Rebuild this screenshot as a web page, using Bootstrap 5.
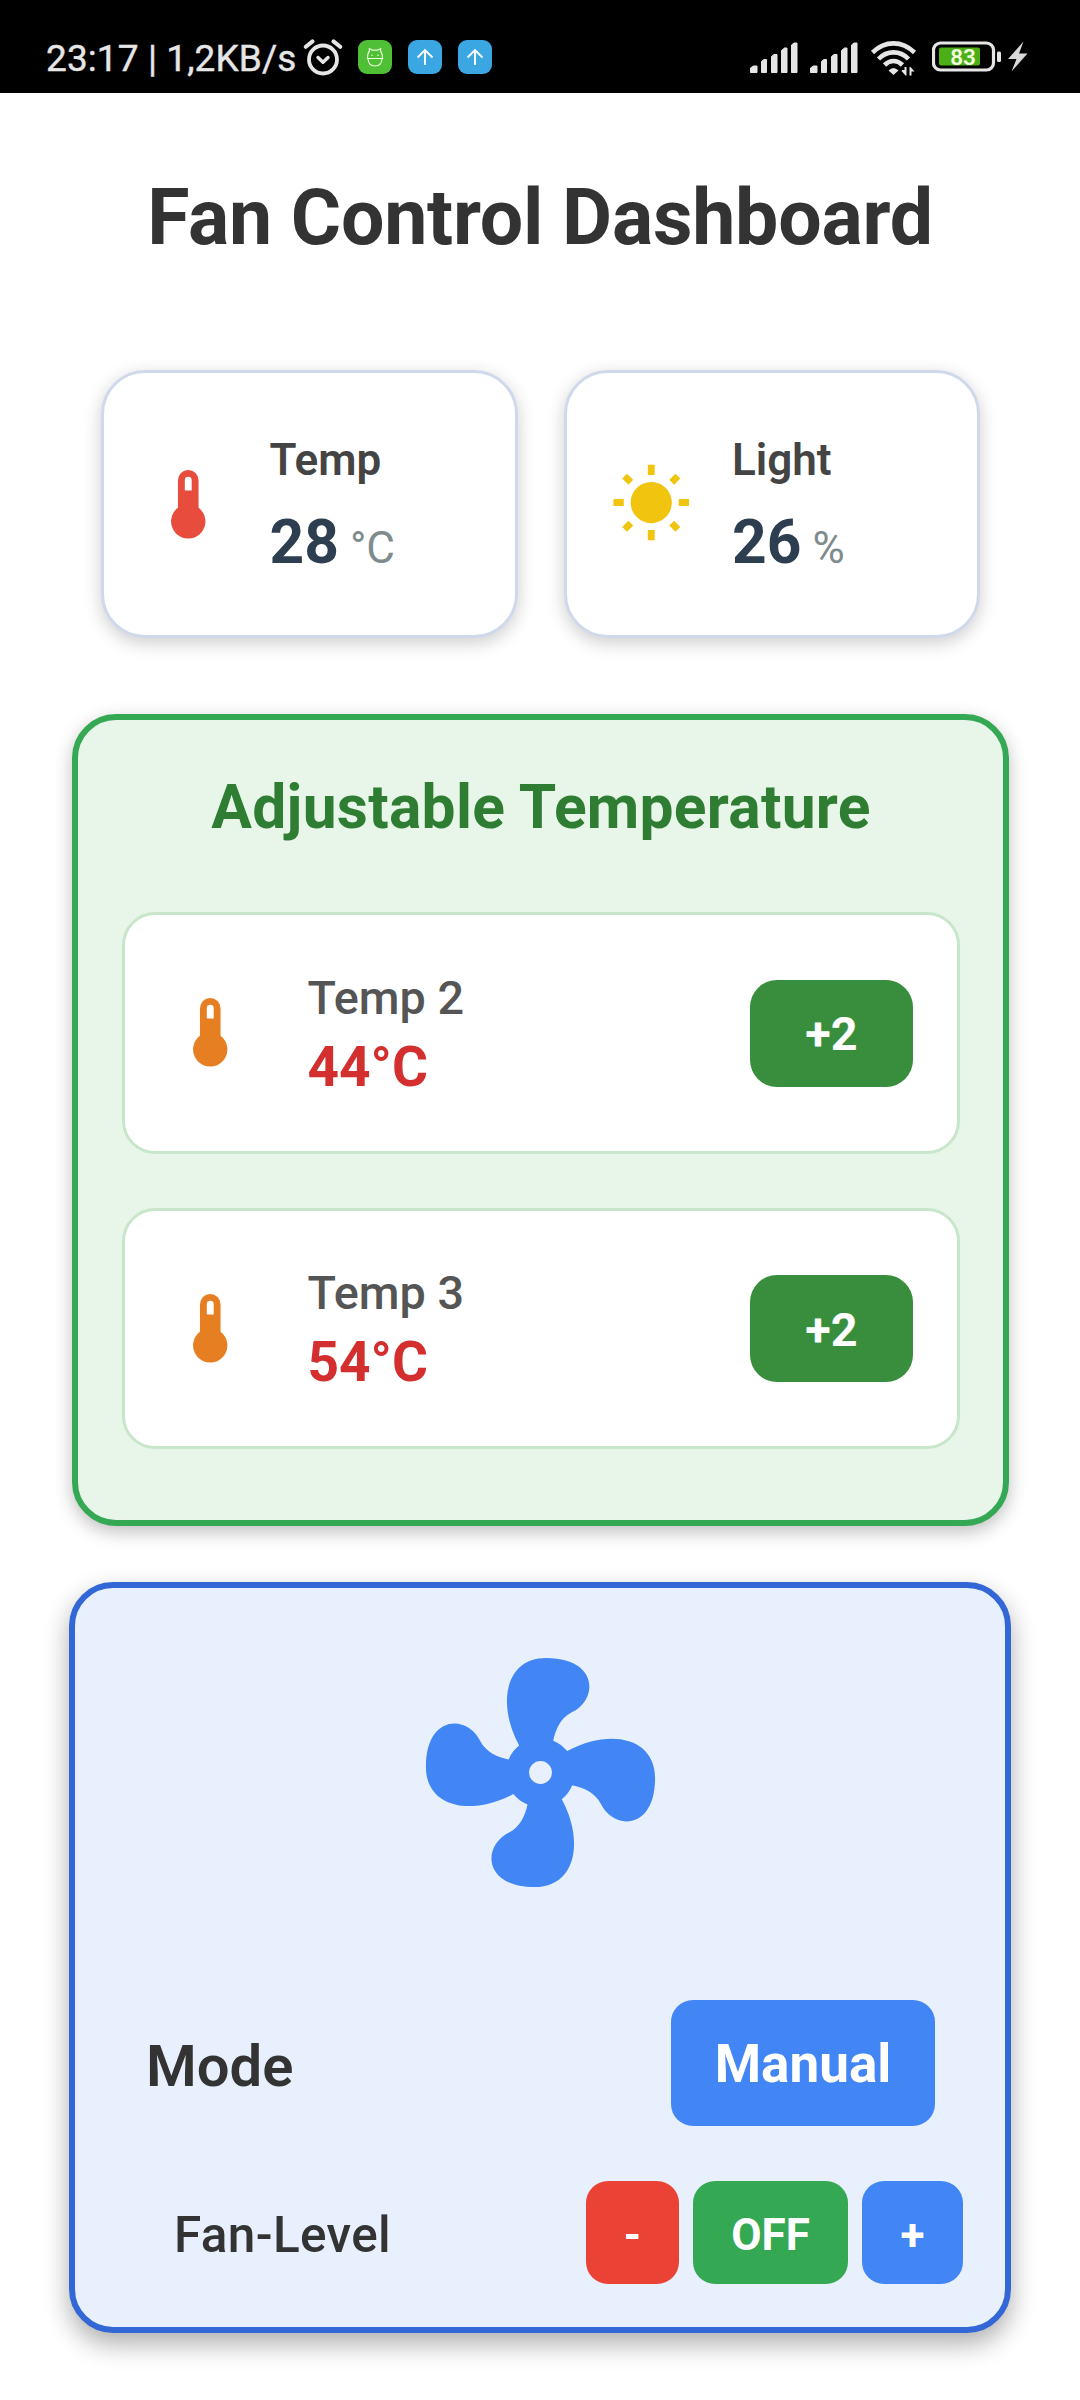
<!DOCTYPE html>
<html lang="en">
<head>
<meta charset="utf-8">
<meta name="viewport" content="width=device-width, initial-scale=1">
<title>Fan Control Dashboard</title>
<link href="https://cdn.jsdelivr.net/npm/bootstrap@5.3.0/dist/css/bootstrap.min.css" rel="stylesheet">
<style>
  body { font-family: Roboto, "Liberation Sans", sans-serif; background: #fff; color: #333; height: 2400px; overflow: hidden; }
  svg { display: block; flex: none; }
  .statusbar { height: 93px; background: #000; color: #e6e6e6; padding: 19px 52px 0 46px; }
  .clock { font-size: 37px; line-height: 40px; white-space: pre; width: 258px; margin-top: 20px; letter-spacing: .1px; -webkit-text-stroke: .4px #e6e6e6; }
  .alarm { margin: 20px 14px 0 -1px; }
  .app-icon { width: 34px; height: 34px; border-radius: 9px; margin: 21px 16px 0 0; }
  .app-green { background: #4fbf35; margin-left: 1px; }
  .app-blue { background: #3ba7e2; }
  .status-right { margin-top: 22px; }
  .signal { margin: 1px 12px 0 0; }
  .wifi { margin-right: 14px; }
  .battery { margin-right: 6px; }
  .page-title { font-size: 77px; line-height: 90px; font-weight: 700; letter-spacing: -.22px; margin: 80px 0 107px; }
  .sensor-row { margin: 0 100px 0 101px; gap: 46px; }
  .sensor { height: 268px; border: 3px solid #d0d9ec; border-radius: 44px; padding: 4px 20px 0 43px; gap: 40px; box-shadow: 0 5px 18px rgba(0,0,0,.2); background: #fff; }
  .sensor svg { margin-top: -4px; }
  .sensor-label { font-size: 44px; line-height: 52px; font-weight: 600; color: #444; margin-bottom: 22px; }
  .sensor-value { font-size: 60.5px; line-height: 70px; font-weight: 700; color: #2c3e50; }
  .sensor-unit { font-size: 44px; line-height: 1; font-weight: 400; color: #7f8c8d; margin-left: 11px; }
  .tone-red { color: #e74c3c; }
  .tone-orange { color: #e67e22; }
  .panel-green { height: 812px; margin: 76px 71px 0 72px; border: 6px solid #34a853; border-radius: 44px; background: #e7f6e9; padding: 52px 43px 0 44px; box-shadow: 0 6px 18px rgba(0,0,0,.25); }
  .panel-title { font-size: 60.5px; line-height: 72px; font-weight: 700; letter-spacing: .28px; color: #2e7d32; margin: 0 0 68px; }
  .zone { height: 242px; border: 3px solid #c8e6c9; border-radius: 33px; background: #fff; padding: 0 44px; }
  .zone + .zone { height: 241px; margin-top: 54px; }
  .zone svg { margin-top: -1px; }
  .zone-text { margin-left: 56px; }
  .zone-name { font-size: 46.75px; line-height: 62px; font-weight: 500; color: #555; }
  .zone-temp { font-size: 55px; line-height: 66px; font-weight: 700; color: #d32f2f; margin-top: 5px; }
  .btn { --bs-btn-padding-x: 0; --bs-btn-padding-y: 0; --bs-btn-border-width: 0; font-weight: 700; color: #fff; }
  .btn-step { width: 163px; height: 107px; border-radius: 27px; background: #388e3c; font-size: 46.75px; padding-top: 3px; }
  .panel-blue { height: 751px; margin: 56px 69px 0; border: 6px solid #3367d6; border-radius: 44px; background: #e7f0fc; padding-top: 47px; box-shadow: 0 11px 26px rgba(0,0,0,.32); }
  .mode-row { margin-top: 90px; height: 126px; padding: 0 70px 0 71px; }
  .mode-label { font-size: 58px; font-weight: 600; padding-top: 7px; }
  .btn-mode { width: 264px; height: 126px; border-radius: 22px; background: #4285f4; font-size: 53px; padding-top: 4px; }
  .level-row { margin-top: 55px; height: 103px; padding: 0 42px 0 99px; }
  .level-label { font-size: 49.5px; font-weight: 500; letter-spacing: .35px; padding-top: 5px; }
  .level-btns { gap: 14px; }
  .btn-level { height: 103px; border-radius: 22px; font-size: 44px; padding-top: 4px; }
  .lv-minus { width: 93px; background: #ea4335; }
  .lv-state { width: 155px; background: #34a853; }
  .lv-plus { width: 101px; background: #4285f4; }
</style>
<script src="https://cdn.jsdelivr.net/npm/bootstrap@5.3.0/dist/js/bootstrap.bundle.min.js"></script>
</head>
<body>
<svg width="0" height="0" class="position-absolute" aria-hidden="true">
  <symbol id="thermo" viewBox="0 0 24 24"><path fill="currentColor" fill-rule="evenodd" d="M15 13V5a3 3 0 0 0-6 0v8a5 5 0 1 0 6 0m-3-9a1 1 0 0 1 1 1v3h-2V5a1 1 0 0 1 1-1z"/></symbol>
  <symbol id="bars" viewBox="0 0 48 31"><path fill="#e6e6e6" stroke="#e6e6e6" stroke-linejoin="round" d="M.5 30.500v-4.500l3-2h3.500v6.500zM11.500 30.500v-11l2.500-2h2.500v13zM21.500 30.500v-16l2.500-2h3v18zM31.500 30.500v-22l3-2.500h2.500v24.500zM41.500 30.500v-27.500l2.500-2h3v29.500z"/></symbol>
  <symbol id="up" viewBox="0 0 34 34"><path fill="none" stroke="#fff" stroke-width="1.900" d="M17 25V10M9.500 17.500 17 10l7.500 7.500"/></symbol>
</svg>

<header class="statusbar d-flex justify-content-between">
  <div class="d-flex align-items-start">
    <div class="clock">23:17 | 1,2KB/s</div>
    <svg class="alarm" width="40" height="37" viewBox="0 0 40 37" fill="none" stroke="#e6e6e6" stroke-linecap="round">
      <circle cx="20" cy="20.500" r="14" stroke-width="3.800"/>
      <path stroke-width="4" d="M2.800 7.800 9.500 2.400M37.200 7.800 30.500 2.400"/>
      <path stroke-width="3.400" stroke-linejoin="round" d="m15 18.500 5 4.800 5-4.800"/>
    </svg>
    <svg class="app-icon app-green" viewBox="0 0 34 34" fill="none" stroke="#e9ffd9" stroke-width="1.200" stroke-linejoin="round">
      <path d="M9.500 18.500c0-3 .5-5.500 1.800-7V8.500l3 1.700h5.400l3-1.700v3c1.300 1.500 1.800 4 1.800 7zM8.800 18.500h16.400M10 18.500c.3 4.500 3 7.500 7 7.500s6.700-3 7-7.500"/>
      <path d="M14 14.500v1.500M20 14.500v1.500"/>
    </svg>
    <svg class="app-icon app-blue"><use href="#up"/></svg>
    <svg class="app-icon app-blue"><use href="#up"/></svg>
  </div>
  <div class="status-right d-flex align-items-start">
    <svg class="signal" width="48" height="31"><use href="#bars"/></svg>
    <svg class="signal" width="48" height="31"><use href="#bars"/></svg>
    <svg class="wifi" width="48" height="35" viewBox="0 0 48 35" fill="none" stroke="#e6e6e6" stroke-width="4.600">
      <path d="M2.500 11.500Q12 2.400 23.500 2.400T44.500 11.500M8.500 18Q15 11.400 23.500 11.400T38.500 18M14.500 24Q18.500 20 23.500 20T32.500 24"/>
      <path fill="#e6e6e6" stroke="none" d="M18.500 29.500q5-5 10 0l-5 4.500zM31.500 29h3v-3h2v8.500h-1zM36.500 26v8.500h-1l-4-4.500h3v-4zM39.500 26h1l4 4.500h-3v4h-2z"/>
    </svg>
    <svg class="battery" width="70" height="32" viewBox="0 0 70 32">
      <rect x="1.500" y="2" width="60" height="27" rx="7" fill="none" stroke="#e6e6e6" stroke-width="3.200"/>
      <rect x="65" y="10.500" width="4" height="10.500" rx="1.500" fill="#e6e6e6"/>
      <rect x="7" y="6.500" width="41" height="18" rx="2" fill="#4caf16"/>
      <text x="31" y="24" text-anchor="middle" font-size="22.500" font-weight="600" fill="#f4ffe0" font-family="Roboto">83</text>
    </svg>
    <svg width="20" height="31" viewBox="0 0 20 31"><path fill="#d9d9d9" d="M15.500.5 0 18h8.500L3.500 30.500 19.500 12.500H11z"/></svg>
  </div>
</header>

<main>
  <h1 class="page-title text-center">Fan Control Dashboard</h1>

  <section class="sensor-row d-flex">
    <div class="sensor d-flex align-items-center flex-fill w-50">
      <svg class="tone-red" width="82.500" height="82.500"><use href="#thermo"/></svg>
      <div>
        <div class="sensor-label">Temp</div>
        <div class="sensor-value">28<span class="sensor-unit">°C</span></div>
      </div>
    </div>
    <div class="sensor d-flex align-items-center flex-fill w-50">
      <svg width="82.500" height="82.500" viewBox="0 .5 24 24"><path fill="#f1c40f" d="m3.550 19.090 1.410 1.410 1.800-1.790-1.420-1.420M12 6a6 6 0 0 0-6 6 6 6 0 0 0 6 6 6 6 0 0 0 6-6c0-3.320-2.690-6-6-6m8 7h3v-2h-3m-2.760 7.710 1.800 1.790 1.410-1.410-1.790-1.800M20.450 5 19.040 3.600l-1.800 1.790 1.420 1.420M13 1h-2v3h2M6.760 5.390 4.960 3.600 3.550 5l1.790 1.810M1 13h3v-2H1m12 9h-2v3h2"/></svg>
      <div>
        <div class="sensor-label">Light</div>
        <div class="sensor-value">26<span class="sensor-unit">%</span></div>
      </div>
    </div>
  </section>

  <section class="panel-green">
    <h2 class="panel-title text-center">Adjustable Temperature</h2>
    <div class="zone d-flex align-items-center">
      <svg class="tone-orange" width="82.500" height="82.500"><use href="#thermo"/></svg>
      <div class="zone-text">
        <div class="zone-name">Temp 2</div>
        <div class="zone-temp">44°C</div>
      </div>
      <button class="btn btn-step ms-auto" type="button">+2</button>
    </div>
    <div class="zone d-flex align-items-center">
      <svg class="tone-orange" width="82.500" height="82.500"><use href="#thermo"/></svg>
      <div class="zone-text">
        <div class="zone-name">Temp 3</div>
        <div class="zone-temp">54°C</div>
      </div>
      <button class="btn btn-step ms-auto" type="button">+2</button>
    </div>
  </section>

  <section class="panel-blue">
    <svg class="mx-auto" width="275" height="275" viewBox="0 0 24 24"><path fill="#4285f4" d="M12 11a1 1 0 0 0-1 1 1 1 0 0 0 1 1 1 1 0 0 0 1-1 1 1 0 0 0-1-1m.5-9c4.500 0 4.600 3.570 2.230 4.750-.99.49-1.430 1.540-1.620 2.470.48.2.9.51 1.220.91 3.700-2 7.670-1.210 7.670 2.370 0 4.500-3.570 4.600-4.740 2.230-.5-.99-1.560-1.430-2.490-1.620-.2.48-.51.89-.91 1.230 1.990 3.690 1.200 7.660-2.380 7.660-4.500 0-4.590-3.580-2.230-4.760.98-.49 1.420-1.530 1.620-2.450-.49-.2-.92-.52-1.240-.92C5.960 15.850 2 15.070 2 11.500 2 7 5.560 6.890 6.740 9.260c.5.99 1.550 1.420 2.480 1.610.19-.48.51-.9.92-1.220C8.150 5.960 8.940 2 12.500 2z"/></svg>
    <div class="mode-row d-flex align-items-center justify-content-between">
      <div class="mode-label">Mode</div>
      <button class="btn btn-mode" type="button">Manual</button>
    </div>
    <div class="level-row d-flex align-items-center justify-content-between">
      <div class="level-label">Fan-Level</div>
      <div class="level-btns d-flex">
        <button class="btn btn-level lv-minus" type="button">-</button>
        <button class="btn btn-level lv-state" type="button">OFF</button>
        <button class="btn btn-level lv-plus" type="button">+</button>
      </div>
    </div>
  </section>
</main>
</body>
</html>
